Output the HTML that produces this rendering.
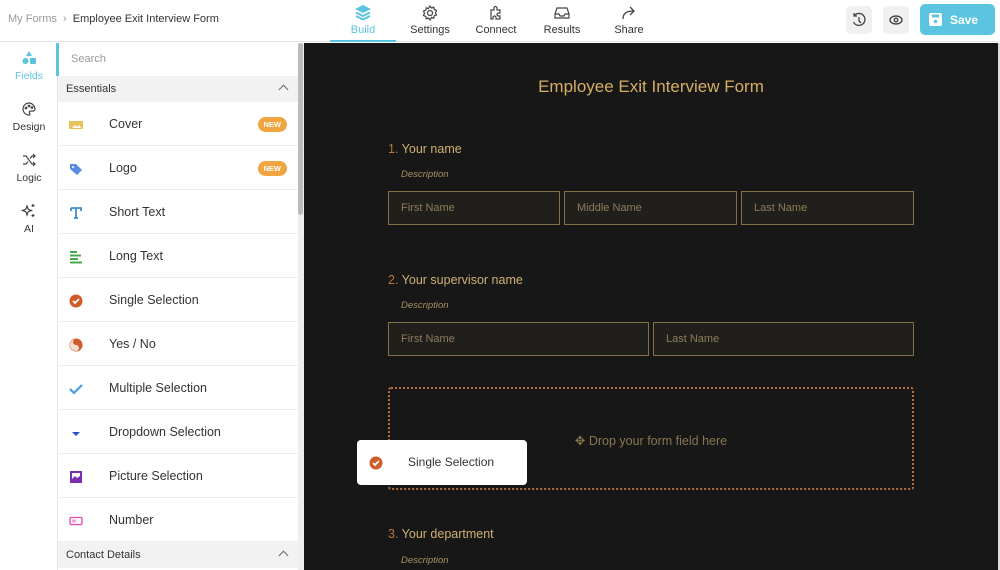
<!DOCTYPE html>
<html><head><meta charset="utf-8"><style>
*{box-sizing:border-box;margin:0;padding:0}
body{width:1000px;height:570px;overflow:hidden;font-family:"Liberation Sans",sans-serif;background:#fff;position:relative;color:#333}
.hdr{position:absolute;left:0;top:0;width:1000px;height:42px;border-bottom:1px solid #e3e3e3;background:#fff}
.bc{position:absolute;left:8px;top:13px;font-size:11px;color:#999}
.bc b{font-weight:normal;color:#333}
.tab{position:absolute;top:0;height:42px;text-align:center;font-size:11px;color:#333}
.tab svg{display:block;margin:4px auto 2px}
.ib{position:absolute;top:6px;width:26px;height:28px;border-radius:5px;background:#f0f0f0}
.save{position:absolute;left:920px;top:4px;width:75px;height:31px;border-radius:5px;background:#5bc4e0;color:#fff;font-weight:bold;font-size:12px}
.rail{position:absolute;left:0;top:43px;width:58px;height:527px;background:#fff;border-right:1px solid #e6e6e6}
.ri{position:absolute;left:0;width:58px;text-align:center;font-size:10.5px;color:#333}
.ri svg{display:block;margin:0 auto 4px}
.panel{position:absolute;left:58px;top:43px;width:240px;height:527px;background:#fff}
.search{height:33px;padding:10px 12px;font-size:11px;color:#999;border-left:3px solid #5bc4e0;margin-left:-2px}
.sec{height:26px;background:#f2f2f2;font-size:11px;padding:7px 8px;position:relative}
.sec:after{content:"";position:absolute;right:11px;top:10px;width:6px;height:6px;border-left:1px solid #666;border-top:1px solid #666;transform:rotate(45deg)}
.row{height:44px;border-bottom:1px solid #eee;position:relative;font-size:12.5px}
.row span.t{position:absolute;left:51px;top:15px}
.row .ic{position:absolute;left:11px;top:16px;width:14px;height:14px}
.new{position:absolute;right:11px;top:15px;background:#f0a540;color:#fff;font-size:7.5px;font-weight:bold;border-radius:8px;padding:3px 6px}
.sb{position:absolute;left:298px;top:43px;width:6px;height:527px;background:#eee}
.sb i{position:absolute;left:0;top:0;width:5px;height:172px;background:#bbb;border-radius:3px}
.cv{position:absolute;left:304px;top:43px;width:694px;height:527px;background:#171717}
.edge{position:absolute;left:998px;top:43px;width:2px;height:527px;background:#ddd}
.title{position:absolute;left:304px;width:694px;top:77px;text-align:center;font-size:17px;color:#d6ae62}
.q{position:absolute;left:388px;font-size:12.5px;color:#d0b071}
.q em{font-style:normal;color:#b5773e}
.d{position:absolute;left:401px;font-size:9.5px;font-style:italic;color:#a89060}
.in{position:absolute;height:34px;border:1.5px solid #857048;background:#201f1c;color:#8e7c58;font-size:11px;padding:10px 12px}
.drop{position:absolute;left:388px;top:387px;width:526px;height:103px;border:2px dotted #b87040;border-radius:3px;text-align:center;padding-top:44px;color:#8a7650;font-size:12.5px}
.card{position:absolute;left:357px;top:440px;width:170px;height:45px;background:#fff;border-radius:4px;font-size:12px}
</style></head><body>
<div class="hdr">
<div class="bc">My Forms &nbsp;›&nbsp; <b>Employee Exit Interview Form</b></div>
<div class="tab" style="left:330px;width:66px;color:#5bc4e0;border-bottom:2px solid #5bc4e0"><svg width="18" height="18" viewBox="0 0 18 18"><path d="M9 1L17 5L9 9L1 5Z" fill="#5bc4e0"/><path d="M2 8.5L9 12L16 8.5M2 12L9 15.5L16 12" stroke="#5bc4e0" stroke-width="2" fill="none"/></svg>Build</div>
<div class="tab" style="left:400px;width:60px"><svg width="18" height="18" viewBox="0 0 18 18" fill="none" stroke="#444" stroke-width="1.2"><circle cx="9" cy="9" r="2.5"/><path d="M9 2l1.5 2 2.3-.8.4 2.4 2.3.9-1 2.2 1 2.2-2.3.9-.4 2.4-2.3-.8L9 16l-1.5-2-2.3.8-.4-2.4-2.3-.9 1-2.2-1-2.2 2.3-.9.4-2.4 2.3.8z"/></svg>Settings</div>
<div class="tab" style="left:466px;width:60px"><svg width="18" height="18" viewBox="0 0 18 18" fill="none" stroke="#444" stroke-width="1.2"><path d="M4 6h3V4a1.5 1.5 0 013 0v2h3v3h-1.5a1.5 1.5 0 000 3H13v3H9v-1.5a1.5 1.5 0 00-3 0V15H4z"/></svg>Connect</div>
<div class="tab" style="left:532px;width:60px"><svg width="18" height="18" viewBox="0 0 18 18" fill="none" stroke="#444" stroke-width="1.2"><path d="M2 10l2-6h10l2 6v4H2z M2 10h4l1 2h4l1-2h4"/></svg>Results</div>
<div class="tab" style="left:599px;width:60px"><svg width="18" height="18" viewBox="0 0 18 18" fill="none" stroke="#444" stroke-width="1.3"><path d="M3 15c0-5 3-8 10-8M10 3l4 4-4 4"/></svg>Share</div>
<div class="ib" style="left:846px"><svg width="26" height="28" viewBox="0 0 26 28" fill="none" stroke="#444" stroke-width="1.3"><path d="M8 10a6 6 0 11-.5 6M8 7v3h3M13 11v4l2 2"/></svg></div>
<div class="ib" style="left:883px"><svg width="26" height="28" viewBox="0 0 26 28" fill="none" stroke="#444" stroke-width="1.4"><ellipse cx="13" cy="14" rx="6" ry="4"/><circle cx="13" cy="14" r="1.8"/></svg></div>
<div class="save"><svg style="position:absolute;left:9px;top:9px" width="13" height="13" viewBox="0 0 13 13"><rect width="13" height="13" rx="2" fill="#fff"/><rect x="3" y="1.5" width="7" height="3" fill="#5bc4e0"/><circle cx="6.5" cy="8.5" r="1.7" fill="#5bc4e0"/></svg><span style="position:absolute;left:30px;top:9px">Save</span></div>
</div>
<div class="rail">
<div class="ri" style="top:7px;color:#5bc4e0"><svg width="16" height="16" viewBox="0 0 16 16" fill="#5bc4e0"><path d="M8 1l3 5H5z"/><circle cx="4.5" cy="11" r="3"/><rect x="9" y="8" width="6" height="6" rx="1"/></svg>Fields</div>
<div class="ri" style="top:58px"><svg width="16" height="16" viewBox="0 0 16 16" fill="none" stroke="#444" stroke-width="1.2"><path d="M8 2a6 6 0 100 12c1 0 1-1 .5-2s0-2 1.5-2h2a2 2 0 002-2c0-3-3-6-6-6z"/><circle cx="5" cy="7" r=".8"/><circle cx="8" cy="5" r=".8"/><circle cx="11" cy="6.5" r=".8"/></svg>Design</div>
<div class="ri" style="top:109px"><svg width="16" height="16" viewBox="0 0 16 16" fill="none" stroke="#444" stroke-width="1.2"><path d="M2 4h3l6 8h3M2 12h3l2-2.5M9 6.5L11 4h3M12 2l2 2-2 2M12 10l2 2-2 2"/></svg>Logic</div>
<div class="ri" style="top:160px"><svg width="16" height="16" viewBox="0 0 16 16" fill="none" stroke="#444" stroke-width="1.2"><path d="M6 3l1.2 3.3L10.5 7.5 7.2 8.7 6 12 4.8 8.7 1.5 7.5 4.8 6.3z"/><path d="M12 1v3M10.5 2.5h3M12 11v3M10.5 12.5h3"/></svg>AI</div>
</div>
<div class="panel">
<div class="search">Search</div>
<div class="sec">Essentials</div>
<div class="row"><svg class="ic" viewBox="0 0 14 14"><rect y="3" width="14" height="8" fill="#e8c35a"/><path d="M3 10l3-3 2 2 2-2 2 3z" fill="#fff"/></svg><span class="t">Cover</span><span class="new">NEW</span></div>
<div class="row"><svg class="ic" viewBox="0 0 14 14"><path d="M1 2h6l6 6-5 5-7-6z" fill="#5a8be0"/><circle cx="4" cy="5" r="1" fill="#fff"/></svg><span class="t">Logo</span><span class="new">NEW</span></div>
<div class="row"><svg class="ic" viewBox="0 0 14 14"><path d="M2 2h10v3M7 2v10M5 12h4M2 2v3" stroke="#3b8fd0" stroke-width="1.8" fill="none"/></svg><span class="t">Short Text</span></div>
<div class="row"><svg class="ic" viewBox="0 0 14 14" fill="#4aa84a"><rect x="1" y="1" width="7" height="2"/><rect x="1" y="4.5" width="11" height="2"/><rect x="1" y="8" width="8" height="2"/><rect x="1" y="11.5" width="12" height="2"/></svg><span class="t">Long Text</span></div>
<div class="row"><svg class="ic" viewBox="0 0 14 14"><circle cx="7" cy="7" r="6.5" fill="#cf5a2a"/><path d="M4 7l2 2 4-4" stroke="#fff" stroke-width="1.8" fill="none"/></svg><span class="t">Single Selection</span></div>
<div class="row"><svg class="ic" viewBox="0 0 14 14"><circle cx="7" cy="7" r="6.5" fill="#cf5a2a"/><path d="M7 1a3 3 0 000 6 3 3 0 010 6 6 6 0 010-12z" fill="#fff" opacity=".8"/></svg><span class="t">Yes / No</span></div>
<div class="row"><svg class="ic" viewBox="0 0 14 14"><path d="M1 7l4 4 8-8" stroke="#4a9de0" stroke-width="2.2" fill="none"/></svg><span class="t">Multiple Selection</span></div>
<div class="row"><svg class="ic" viewBox="0 0 14 14"><path d="M3 6h8l-4 4z" fill="#2b4fc0"/></svg><span class="t">Dropdown Selection</span></div>
<div class="row"><svg class="ic" viewBox="0 0 14 14"><rect x="1" y="1" width="12" height="12" fill="#7a2fb0"/><rect x="3" y="3" width="8" height="6" fill="#fff"/><path d="M3 9l3-3 2 2 3-2v3z" fill="#7a2fb0"/></svg><span class="t">Picture Selection</span></div>
<div class="row"><svg class="ic" viewBox="0 0 14 14"><rect x="1" y="3.5" width="12" height="7" rx="1" stroke="#e04aa8" stroke-width="1.3" fill="none"/><path d="M4 5.5v3M6 5.5v3" stroke="#e04aa8"/></svg><span class="t">Number</span></div>
<div class="sec" style="border-bottom:none">Contact Details</div>
</div>
<div class="sb"><i></i></div>
<div class="cv"></div><div class="edge"></div>
<div class="title">Employee Exit Interview Form</div>
<div class="q" style="top:142px"><em>1.</em> Your name</div>
<div class="d" style="top:169px">Description</div>
<div class="in" style="left:388px;top:191px;width:172px">First Name</div>
<div class="in" style="left:564px;top:191px;width:173px">Middle Name</div>
<div class="in" style="left:741px;top:191px;width:173px">Last Name</div>
<div class="q" style="top:273px"><em>2.</em> Your supervisor name</div>
<div class="d" style="top:300px">Description</div>
<div class="in" style="left:388px;top:322px;width:261px">First Name</div>
<div class="in" style="left:653px;top:322px;width:261px">Last Name</div>
<div class="drop">✥ Drop your form field here</div>
<div class="card"><svg style="position:absolute;left:12px;top:16px" width="14" height="14" viewBox="0 0 14 14"><circle cx="7" cy="7" r="6.5" fill="#cf5a2a"/><path d="M4 7l2 2 4-4" stroke="#fff" stroke-width="1.8" fill="none"/></svg><span style="position:absolute;left:51px;top:15px">Single Selection</span></div>
<div class="q" style="top:527px"><em>3.</em> Your department</div>
<div class="d" style="top:555px">Description</div>
</body></html>
